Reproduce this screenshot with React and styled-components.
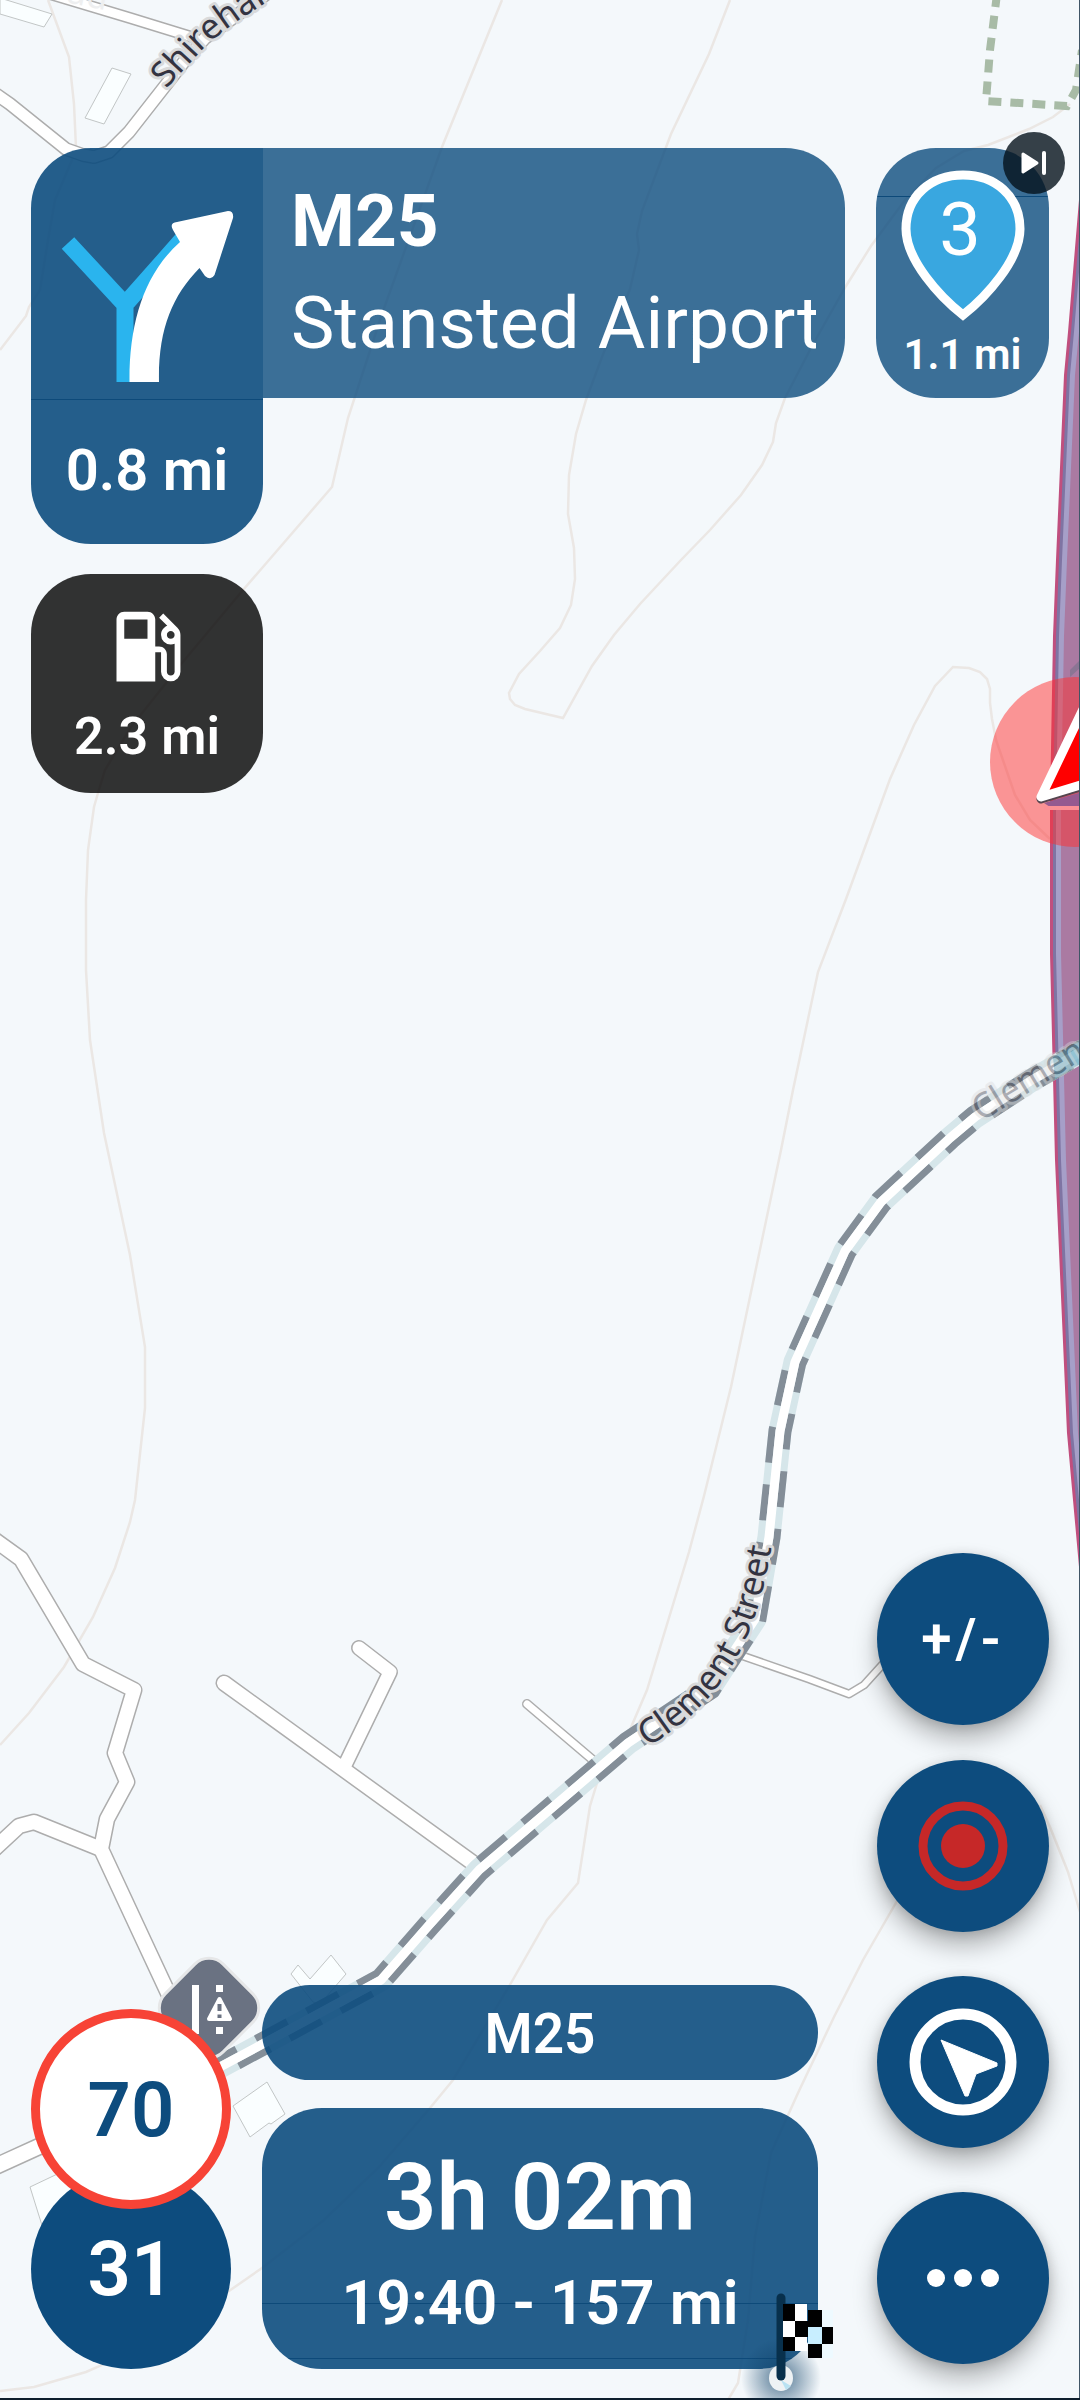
import React from 'react';
import styled, { createGlobalStyle } from 'styled-components';
import { MdLocalGasStation } from 'react-icons/md';

const GlobalStyle = createGlobalStyle`
  * {
    box-sizing: border-box;
  }
  body {
    margin: 0;
    background: #f4f8fb;
    font-family: Roboto, "Liberation Sans", sans-serif;
  }
`;

// --- Styled Components ---

const Screen = styled.div`
  position: relative;
  display: flex;
  flex-direction: column;
  justify-content: space-between;
  min-height: 100vh;
  padding: 148px 31px 31px 31px;
  overflow: hidden;
  color: #fff;
`;

const MapLayer = styled.svg`
  position: absolute;
  inset: 0;
  width: 100%;
  height: 100%;
`;

const TopBar = styled.header`
  position: relative;
  display: flex;
  align-items: flex-start;
`;

const TurnColumn = styled.div`
  display: flex;
  flex-direction: column;
  gap: 30px;
  width: 232px;
`;

const TurnCard = styled.section`
  border-radius: 60px 0 60px 60px;
  background: rgba(13, 76, 126, 0.9);
  overflow: hidden;
`;

const TurnIcon = styled.div`
  height: 252px;
  border-bottom: 1px solid #0d4a7a;
`;

const TurnDistance = styled.div`
  height: 144px;
  padding-top: 2px;
  font-size: 58px;
  font-weight: 600;
  line-height: 136px;
  text-align: center;
`;

const FuelCard = styled.section`
  display: flex;
  flex-direction: column;
  align-items: center;
  height: 219px;
  padding-top: 26px;
  border-radius: 60px;
  background: rgba(0, 0, 0, 0.8);
  font-size: 52px;
  font-weight: 600;
  line-height: 88px;

  svg {
    display: block;
  }
`;

const StreetCard = styled.section`
  flex: 1;
  min-width: 0;
  height: 250px;
  padding: 22px 29px 0 28px;
  border-radius: 0 60px 60px 0;
  background: rgba(13, 76, 126, 0.8);
`;

const StreetLine = styled.div`
  font-size: 73px;
  font-weight: ${({ $bold }) => ($bold ? 700 : 400)};
  line-height: 102px;
  white-space: nowrap;
  overflow: hidden;
`;

const WaypointCard = styled.section`
  position: relative;
  flex: none;
  width: 173px;
  height: 250px;
  margin-left: 31px;
  padding-top: 20px;
  border-radius: 60px;
  background: linear-gradient(#0d4a7a, #0d4a7a) 0 48px / 100% 1px no-repeat, rgba(13, 76, 126, 0.8);
  font-size: 42px;
  font-weight: 600;
  line-height: 62px;
  text-align: center;

  svg {
    display: block;
    margin: 0 auto;
  }
`;

const SkipButton = styled.button`
  position: absolute;
  top: -16px;
  right: -16px;
  width: 62px;
  height: 62px;
  padding: 0;
  border: none;
  border-radius: 50%;
  background: rgba(5, 18, 28, 0.8);
`;

const BottomBar = styled.footer`
  position: relative;
  display: flex;
  align-items: flex-end;
`;

const SpeedStack = styled.div`
  flex: none;
  width: 200px;
`;

const SpeedLimit = styled.div`
  position: relative;
  z-index: 1;
  height: 200px;
  border: 9px solid #f74336;
  border-radius: 50%;
  background: #fff;
  color: #0d4c7e;
  font-size: 76px;
  font-weight: 600;
  line-height: 184px;
  text-align: center;
`;

const CurrentSpeed = styled.div`
  height: 200px;
  margin-top: -40px;
  border-radius: 50%;
  background: #0d4c7e;
  font-size: 76px;
  font-weight: 600;
  line-height: 200px;
  text-align: center;
`;

const TripColumn = styled.div`
  flex: 1;
  display: flex;
  flex-direction: column;
  gap: 28px;
  margin: 0 59px 0 31px;
  text-align: center;
  font-weight: 600;
`;

const RoadPill = styled.div`
  height: 95px;
  border-radius: 48px;
  background: rgba(13, 76, 126, 0.9);
  font-size: 55px;
  line-height: 98px;
`;

const EtaCard = styled.section`
  position: relative;
  height: 261px;
  padding-top: 32px;
  border-radius: 60px;
  background:
    linear-gradient(#0d4a7a, #0d4a7a) 0 195px / 100% 1px no-repeat,
    linear-gradient(#0d4a7a, #0d4a7a) 0 250px / 100% 1px no-repeat,
    rgba(13, 76, 126, 0.9);
`;

const Remaining = styled.div`
  font-size: 92px;
  line-height: 116px;
`;

const Arrival = styled.div`
  font-size: 61px;
  line-height: 94px;
`;

const DestinationFlag = styled.svg`
  position: absolute;
  right: -62px;
  bottom: -31px;
  width: 160px;
  height: 130px;
`;

const FabColumn = styled.nav`
  flex: none;
  display: flex;
  flex-direction: column;
  gap: 44px;
  margin-bottom: 5px;
`;

const FabPair = styled.div`
  display: flex;
  flex-direction: column;
  gap: 35px;
`;

const Fab = styled.button`
  display: flex;
  align-items: center;
  justify-content: center;
  width: 172px;
  height: 172px;
  padding: 0;
  border: none;
  border-radius: 50%;
  background: #0d4c7e;
  box-shadow: 0 14px 24px rgba(0, 0, 0, 0.28), 0 2px 12px rgba(0, 0, 0, 0.14);
  color: #fff;
  font-family: inherit;
  font-size: 55px;
  font-weight: 600;
  letter-spacing: 4px;
`;

// --- Map data ---

const contours = [
  '48,0 69,57 74,104 76,148 72,160 55,200 48,240 40,290 29,307 26,316 0,350',
  '502,0 442,147 382,314 348,418 332,487 269,560 243,590 182,663 131,727 105,770 98,793 94,807 88,850 86,900 86,970 90,1040 104,1133 130,1255 145,1347 145,1408 135,1500 130,1522 115,1568 93,1617 64,1667 29,1713 0,1745',
  '730,0 709,54 671,134 642,211 637,234 639,250 630,289 602,357 586,400 576,434 569,475 568,514 574,548 575,579 571,605 560,628 540,651 519,674 509,693 510,699 515,705 525,709 563,718 592,666 614,635 640,604 681,560 710,530 741,495 762,465 773,442 776,423 785,398 812,346 846,286 871,246 905,200 936,168 964,151 988,145 1029,129 1053,117 1070,104',
  '1050,839 1030,820 1015,795 996,740 992,719 990,703 990,689 987,679 980,672 969,668 953,667 935,686 914,725 890,779 846,899 818,972 793,1090 781,1150 766,1221 731,1387 704,1496 689,1552 647,1690 626,1739 604,1760 590,1806 578,1883 547,1920 511,1983 453,2080 430,2108 379,2167 324,2220 262,2268 229,2291 102,2365 86,2372 34,2387 0,2391',
  '728,2400 738,2383 748,2320 755,2237 771,2153 798,2093 834,2017 863,1960 897,1901 930,1840',
  '1040,1805 1050,1827 1068,1872 1080,1912',
];

const roads = [
  { width: 12, points: '40,-9 130,18 195,38' },
  { width: 14, points: '-10,90 10,104 66,149 83,155 94,157 109,152 129,132 183,63 205,38 265,-5' },
  { width: 17, points: '-8,1538 21,1559 83,1664 134,1690 115,1753 127,1782 107,1819 101,1849 148,1950 190,2040' },
  { width: 17, points: '-8,1851 19,1826 34,1822 101,1849' },
  { width: 17, points: '224,1683 473,1863' },
  { width: 16, points: '359,1648 390,1672 345,1765' },
  { width: 10, points: '527,1704 600,1766' },
  { width: 9, points: '740,1655 809,1679 849,1694 864,1685 883,1664 905,1640' },
  { width: 18, points: '-8,2168 38,2147 100,2120' },
];

const buildings = [
  '0,-2 52,14 44,27 0,14',
  '112,68 131,74 104,124 85,118',
  '291,1974 298,1965 310,1979 331,1955 346,1974 320,2004 313,2002',
  '233,2106 267,2082 285,2114 271,2124 269,2123 250,2137',
  '30,2187 70,2168 95,2235 45,2235',
];

const clementStreet = [
  [1084, 1050], [1032, 1080], [975, 1117], [950, 1138], [881, 1202], [845, 1251], [795, 1362],
  [780, 1431], [769, 1537], [755, 1619], [710, 1688], [628, 1743], [540, 1818], [479, 1870],
  [430, 1924], [381, 1980], [220, 2067], [150, 2103],
];

// shifts a polyline sideways so the tunnel casing can be dashed on each side
const offsetLine = (line, distance) =>
  line
    .map(([x, y], i) => {
      const [px, py] = line[Math.max(i - 1, 0)];
      const [nx, ny] = line[Math.min(i + 1, line.length - 1)];
      const length = Math.hypot(nx - px, ny - py);
      return `${x - ((ny - py) / length) * distance},${y + ((nx - px) / length) * distance}`;
    })
    .join(' ');

const routeEdge = [
  [1082, 130], [1079, 200], [1068, 332], [1064, 375], [1056, 560], [1053, 636], [1050, 805],
  [1050, 954], [1055, 1160], [1067, 1433], [1080, 1578],
];

const routeBand = (inset) =>
  `${routeEdge.map(([x, y]) => `${x + inset},${y}`).join(' ')} 1100,1578 1100,130`;

const flagSquares = [
  [43, 34, 12, 17, '#000'], [55, 34, 12, 17, '#fff'],
  [43, 51, 12, 16, '#fff'], [55, 51, 14, 16, '#000'],
  [43, 67, 12, 14, '#000'], [55, 67, 12, 14, '#fff'],
  [68, 40, 14, 17, '#000'], [82, 40, 11, 17, '#eefaff'],
  [68, 57, 14, 17, '#c8eeff'], [82, 57, 11, 17, '#000'],
  [68, 74, 14, 14, '#000'], [82, 74, 11, 14, '#eefaff'],
];

const NavMap = () => (
  <MapLayer aria-hidden="true">
    {contours.map((points) => (
      <polyline key={points} points={points} fill="none" stroke="#ebe7e4" strokeWidth="2.500" />
    ))}
    {buildings.map((points) => (
      <polygon key={points} points={points} fill="#fafeff" stroke="#c2c6c6" strokeWidth="1" />
    ))}

    <g fill="none" strokeLinecap="round" strokeLinejoin="round">
      {roads.map(({ points, width }) => (
        <polyline key={points} points={points} stroke="#adadad" strokeWidth={width} />
      ))}
      {roads.map(({ points, width }) => (
        <polyline key={points} points={points} stroke="#fff" strokeWidth={width - 3} />
      ))}
    </g>

    {/* county boundary */}
    <polyline
      points="997,-6 990,50 986,101 1067,106 1076,90 1082,50"
      fill="none"
      stroke="#a8bba6"
      strokeWidth="8"
      strokeDasharray="13 9"
    />

    {/* motorway with the active route */}
    <polygon points={routeBand(0)} fill="#c04f7e" />
    <polygon points={routeBand(3)} fill="#7f74a3" />
    <polygon points={routeBand(6)} fill="#a69fc8" />
    <polygon points={routeBand(11)} fill="#aa7aa2" />
    <polygon points="1070,670 1080,660 1080,668 1070,677" fill="#8b7594" />

    <g fill="none" strokeLinejoin="round">
      <polyline points={offsetLine(clementStreet, 0)} stroke="#d6e6ea" strokeWidth="23" />
      <polyline points={offsetLine(clementStreet, 8)} stroke="#848e98" strokeWidth="7" strokeDasharray="36 22" strokeDashoffset="10" />
      <polyline points={offsetLine(clementStreet, -8)} stroke="#848e98" strokeWidth="7" strokeDasharray="36 22" strokeDashoffset="40" />
      <polyline points={offsetLine(clementStreet, 0)} stroke="#fff" strokeWidth="9" />
    </g>
    <polygon points="1053,1057 1080,1041 1080,1064 1055,1079" fill="#6fb0c6" fillOpacity="0.75" />

    <defs>
      <path id="clement-path" d="M647,1747 Q713,1709 743,1645 Q766,1598 775,1520" />
      <path id="clement-faded-path" d="M981,1122 L1100,1049" />
      <path id="shirehall-path" d="M166,89 L202,50 Q230,22 292,-12" />
    </defs>
    <g
      fill="#333341"
      stroke="#d9dadb"
      strokeWidth="6"
      strokeLinejoin="round"
      paintOrder="stroke"
      fontFamily='"Noto Sans", sans-serif'
      fontSize="35"
    >
      <text><textPath href="#clement-path">Clement Street</textPath></text>
      <text><textPath href="#shirehall-path">Shirehal</textPath></text>
      <text opacity="0.4"><textPath href="#clement-faded-path">Clemen</textPath></text>
    </g>
    <text x="66" y="2" transform="rotate(12 66 0)" fill="#eeeff0" fontFamily='"Noto Sans", sans-serif' fontSize="35">ad</text>

    {/* hazard sign */}
    <rect x="168" y="1967" width="82" height="82" rx="20" transform="rotate(45 209 2008)" fill="#6a7282" stroke="#e6e7e8" strokeWidth="3" />
    <g fill="#fff">
      <rect x="192" y="1985" width="7" height="49" />
      <rect x="216" y="1985" width="7" height="7" />
      <rect x="216" y="2027" width="7" height="7" />
      <path d="M219.500 1999 L230 2019 H209 Z" stroke="#fff" strokeWidth="4" strokeLinejoin="round" />
    </g>
    <path d="M217.500 2004h4v7h-4zM217.500 2014.500h4v3.500h-4z" fill="#6a7282" />

    {/* own position */}
    <circle cx="1075" cy="762" r="85" fill="#ff3030" fillOpacity="0.5" />
    <path d="M1044 803 L1090 790 V807 H1050 Z" fill="#965a90" />
    <path d="M1044 808 H1090" stroke="#fc9095" strokeWidth="4" />
    <path d="M1041 799 L1090 784" stroke="#55454f" strokeWidth="9" strokeLinecap="round" />
    <path d="M1120 632 L1041 797 L1120 773 Z" fill="#f00" stroke="#fff" strokeWidth="9" strokeLinejoin="round" />

    <path d="M1079.500 0 V2400" stroke="#3f5566" strokeWidth="1" />
    <path d="M0 2399 H1080" stroke="#0e1e2c" strokeWidth="2" />
  </MapLayer>
);

const App = () => (
  <>
    <GlobalStyle />
    <Screen>
      <NavMap />

      <TopBar>
        <TurnColumn>
          <TurnCard>
            <TurnIcon>
              <svg width="232" height="251" viewBox="31 148 232 251" aria-label="Keep right">
                <path d="M68 243 L125 304.500 L182 240 M125 300 V382" fill="none" stroke="#2ab4ee" strokeWidth="17" />
                <path
                  d="M129.500 382 C129 325 143 275 180 242 L173 230 Q169 223 177 222 L228 211 Q234 211 233 218 L214.500 275 Q211 281 205 276 L199.500 268 C172 296 158 330 159 382 Z"
                  fill="#fff"
                />
              </svg>
            </TurnIcon>
            <TurnDistance>0.8 mi</TurnDistance>
          </TurnCard>
          <FuelCard>
            <MdLocalGasStation size={93} />
            2.3 mi
          </FuelCard>
        </TurnColumn>

        <StreetCard>
          <StreetLine $bold>M25</StreetLine>
          <StreetLine>Stansted Airport</StreetLine>
        </StreetCard>

        <WaypointCard>
          <svg width="126" height="156" viewBox="0 0 126 156">
            <path
              d="M63 147 C40 129 6 92 6 61 C6 28 31 7 63 7 C95 7 120 28 120 61 C120 92 86 129 63 147 Z"
              fill="#39a7e0"
              stroke="#fff"
              strokeWidth="9"
            />
            <text x="60" y="87" fill="#fff" fontSize="74" fontWeight="400" textAnchor="middle">3</text>
          </svg>
          1.1 mi
          <SkipButton aria-label="Skip waypoint">
            <svg width="62" height="62" viewBox="0 0 62 62">
              <path d="M20 22 L34 31 L20 40 Z" fill="#fff" stroke="#fff" strokeWidth="3" strokeLinejoin="round" />
              <path d="M41 21 V41" stroke="#fff" strokeWidth="4" strokeLinecap="round" />
            </svg>
          </SkipButton>
        </WaypointCard>
      </TopBar>

      <BottomBar>
        <SpeedStack>
          <SpeedLimit>70</SpeedLimit>
          <CurrentSpeed>31</CurrentSpeed>
        </SpeedStack>

        <TripColumn>
          <RoadPill>M25</RoadPill>
          <EtaCard>
            <Remaining>3h 02m</Remaining>
            <Arrival>19:40 - 157 mi</Arrival>
            <DestinationFlag viewBox="-20 0 160 130" aria-hidden="true">
              <defs>
                <radialGradient id="flag-glow">
                  <stop offset="0" stopColor="#0c3f66" stopOpacity="0.7" />
                  <stop offset="0.5" stopColor="#0c3f66" stopOpacity="0.35" />
                  <stop offset="1" stopColor="#0c3f66" stopOpacity="0" />
                </radialGradient>
              </defs>
              <circle cx="41" cy="108" r="40" fill="url(#flag-glow)" />
              <ellipse cx="41" cy="108" rx="12" ry="13" fill="#eef2f4" />
              <path d="M41 110 L51 116 L46 120 Z" fill="#b9e2f2" />
              <path d="M41 28 V106" stroke="#08304c" strokeWidth="9" strokeLinecap="round" />
              {flagSquares.map(([x, y, width, height, fill]) => (
                <rect key={`${x}-${y}`} x={x} y={y} width={width} height={height} fill={fill} />
              ))}
            </DestinationFlag>
          </EtaCard>
        </TripColumn>

        <FabColumn>
          <FabPair>
            <Fab>+/-</Fab>
            <Fab aria-label="Record">
              <svg width="92" height="92" viewBox="0 0 92 92">
                <circle cx="46" cy="46" r="40" fill="none" stroke="#c62828" strokeWidth="9" />
                <circle cx="46" cy="46" r="22" fill="#c62828" />
              </svg>
            </Fab>
          </FabPair>
          <Fab aria-label="Recenter">
            <svg width="108" height="108" viewBox="0 0 108 108">
              <circle cx="54" cy="54" r="48" fill="none" stroke="#fff" strokeWidth="11" />
              <path d="M32 32 L88 55 V58 L67 66 L59 88 H56 Z" fill="#fff" stroke="#fff" strokeWidth="1" strokeLinejoin="round" />
            </svg>
          </Fab>
          <Fab aria-label="More">
            <svg width="72" height="18" viewBox="0 0 72 18" fill="#fff">
              <circle cx="9" cy="9" r="9" />
              <circle cx="36" cy="9" r="9" />
              <circle cx="63" cy="9" r="9" />
            </svg>
          </Fab>
        </FabColumn>
      </BottomBar>
    </Screen>
  </>
);

export default App;
